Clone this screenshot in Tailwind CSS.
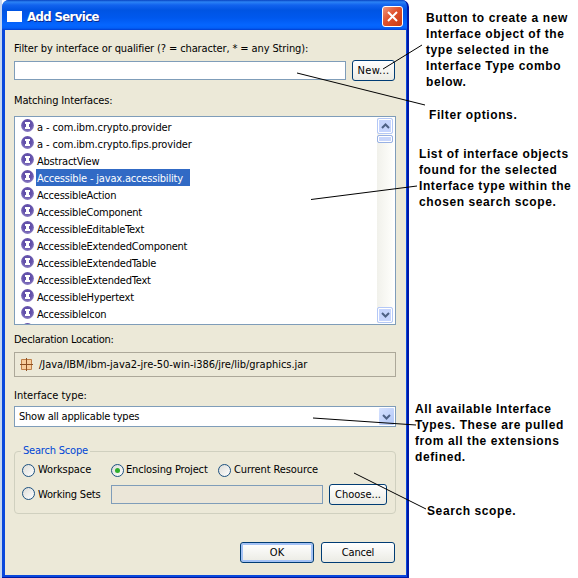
<!DOCTYPE html>
<html lang="en">
<head>
<meta charset="utf-8">
<title>Add Service</title>
<script src="https://cdn.jsdelivr.net/npm/@tailwindcss/browser@4"></script>
</head>
<body class="bg-white">
<svg class="absolute h-0 w-0">
  <defs>
    <radialGradient id="purple" cx="50%" cy="40%" r="60%"><stop offset="0" stop-color="#5a48a4"/><stop offset=".6" stop-color="#6654ac"/><stop offset="1" stop-color="#8d80c4"/></radialGradient>
    <symbol id="iface" viewBox="0 0 13 13"><circle cx="6.5" cy="6.5" r="6.4" fill="url(#purple)"/><path d="M4 3h5v2H8v3h1v2H4V8h1V5H4z" fill="#fff"/></symbol>
    <symbol id="chev" viewBox="0 0 9 6"><path d="M1 1l3.500 3.500L8 1" fill="none" stroke="#4d6185" stroke-width="2"/></symbol>
  </defs>
</svg>
<div class="relative flex h-[578px] w-[578px] overflow-hidden bg-white font-['DejaVu_Sans_Condensed','DejaVu_Sans',sans-serif] text-[11px] leading-[14px] whitespace-nowrap text-black">
  <div class="h-full w-[2px] shrink-0 bg-[#c5d5f0]"></div>
  <section class="flex h-[578px] w-[407px] shrink-0 flex-col overflow-hidden rounded-t-[7px] border-r-[2px] border-b-[1px] border-[#0019a5] bg-[#0a48dc]">
    <header class="flex h-[30px] shrink-0 items-center bg-[linear-gradient(180deg,#0842c0_0,#2b83f5_2px,#1263ee_5px,#0054e3_10px,#0058ee_18px,#0566ff_25px,#0360f8_28px,#003dd0_30px)] pt-[3px] pr-[4px] pl-[5px]">
      <span class="mb-[1px] h-[11px] w-[15px] bg-white"></span>
      <h1 class="ml-[5px] grow font-['DejaVu_Sans_Condensed',sans-serif] text-[13px] font-bold tracking-[-0.6px] text-white [text-shadow:1px_1px_0_#0a2a8c]">Add Service</h1>
      <span class="flex h-[21px] w-[21px] items-center justify-center rounded-[3px] border border-white bg-[linear-gradient(135deg,#f0967c,#e0512c_45%,#c63a14)]">
        <svg class="h-[11px] w-[11px]" viewBox="0 0 11 11"><path d="M1 1l9 9M10 1l-9 9" stroke="#fff" stroke-width="2"/></svg>
      </span>
    </header>
    <div class="mr-[1px] ml-[3px] flex h-[545px] flex-col bg-[#ece9d8] pr-[10px] pl-[9px]">
      <label class="mt-[12px] h-[19px] tracking-[-0.12px]">Filter by interface or qualifier (? = character, * = any String):</label>
      <div class="flex h-[20px] items-start justify-between pr-[1px]">
        <span class="h-[19px] w-[332px] shrink-0 border border-[#7f9db9] bg-white"></span>
        <button class="-mt-[1px] h-[21px] w-[43px] shrink-0 rounded-[3px] border border-[#003c74] bg-linear-to-b from-white to-[#ebebe4] leading-none tracking-[0.3px]">New...</button>
      </div>
      <label class="mt-[13px] h-[22px] tracking-[-0.15px]">Matching Interfaces:</label>
      <div class="flex h-[209px] shrink-0 justify-between overflow-hidden border border-[#7f9db9] bg-white py-[1px] pr-[2px] pl-[6px]">
        <ul class="flex flex-col tracking-[-0.22px]">
          <li class="flex h-[17px] shrink-0"><svg class="mt-[1px] h-[13px] w-[13px]"><use href="#iface"/></svg><span class="ml-[2px] h-[17px] px-[1px] leading-[20px] tracking-[-0.12px]">a - com.ibm.crypto.provider</span></li>
          <li class="flex h-[17px] shrink-0"><svg class="mt-[1px] h-[13px] w-[13px]"><use href="#iface"/></svg><span class="ml-[2px] h-[17px] px-[1px] leading-[20px] tracking-[-0.12px]">a - com.ibm.crypto.fips.provider</span></li>
          <li class="flex h-[17px] shrink-0"><svg class="mt-[1px] h-[13px] w-[13px]"><use href="#iface"/></svg><span class="ml-[2px] h-[17px] px-[1px] leading-[20px]">AbstractView</span></li>
          <li class="flex h-[17px] shrink-0"><svg class="mt-[1px] h-[13px] w-[13px]"><use href="#iface"/></svg><span class="ml-[2px] h-[17px] w-[154px] bg-[#316ac5] px-[1px] leading-[20px] tracking-[-0.18px] text-white">Accessible - javax.accessibility</span></li>
          <li class="flex h-[17px] shrink-0"><svg class="mt-[1px] h-[13px] w-[13px]"><use href="#iface"/></svg><span class="ml-[2px] h-[17px] px-[1px] leading-[20px]">AccessibleAction</span></li>
          <li class="flex h-[17px] shrink-0"><svg class="mt-[1px] h-[13px] w-[13px]"><use href="#iface"/></svg><span class="ml-[2px] h-[17px] px-[1px] leading-[20px]">AccessibleComponent</span></li>
          <li class="flex h-[17px] shrink-0"><svg class="mt-[1px] h-[13px] w-[13px]"><use href="#iface"/></svg><span class="ml-[2px] h-[17px] px-[1px] leading-[20px]">AccessibleEditableText</span></li>
          <li class="flex h-[17px] shrink-0"><svg class="mt-[1px] h-[13px] w-[13px]"><use href="#iface"/></svg><span class="ml-[2px] h-[17px] px-[1px] leading-[20px]">AccessibleExtendedComponent</span></li>
          <li class="flex h-[17px] shrink-0"><svg class="mt-[1px] h-[13px] w-[13px]"><use href="#iface"/></svg><span class="ml-[2px] h-[17px] px-[1px] leading-[20px]">AccessibleExtendedTable</span></li>
          <li class="flex h-[17px] shrink-0"><svg class="mt-[1px] h-[13px] w-[13px]"><use href="#iface"/></svg><span class="ml-[2px] h-[17px] px-[1px] leading-[20px]">AccessibleExtendedText</span></li>
          <li class="flex h-[17px] shrink-0"><svg class="mt-[1px] h-[13px] w-[13px]"><use href="#iface"/></svg><span class="ml-[2px] h-[17px] px-[1px] leading-[20px]">AccessibleHypertext</span></li>
          <li class="flex h-[17px] shrink-0"><svg class="mt-[1px] h-[13px] w-[13px]"><use href="#iface"/></svg><span class="ml-[2px] h-[17px] px-[1px] leading-[20px]">AccessibleIcon</span></li>
          <li class="flex h-[2px] shrink-0 overflow-hidden"><svg class="mt-[1px] h-[13px] w-[13px] shrink-0"><use href="#iface"/></svg></li>
        </ul>
        <div class="flex h-[205px] w-[16px] flex-col bg-linear-to-r from-[#f1f1eb] to-[#fefefb]">
          <span class="flex h-[16px] shrink-0 items-center justify-center rounded-[2px] border border-[#b4c8f6] bg-[#c6d5fd] inset-ring inset-ring-white"><svg class="h-[6px] w-[9px] rotate-180"><use href="#chev"/></svg></span>
          <span class="mt-[1px] h-[8px] shrink-0 rounded-[2px] border border-[#98b1e4] bg-[#c8d6fb] inset-ring inset-ring-white"></span>
          <span class="mt-auto flex h-[16px] shrink-0 items-center justify-center rounded-[2px] border border-[#b4c8f6] bg-[#c6d5fd] inset-ring inset-ring-white"><svg class="h-[6px] w-[9px]"><use href="#chev"/></svg></span>
        </div>
      </div>
      <label class="mt-[8px] h-[19px] tracking-[-0.27px]">Declaration Location:</label>
      <div class="flex h-[25px] shrink-0 items-center border border-[#aca899] pl-[5px]">
        <svg class="h-[13px] w-[13px]" viewBox="0 0 13 13"><path d="M1.500 1.500h10v10h-10z" fill="#f8cd9c" stroke="#c08048"/><path d="M6.500 0v13M0 6.500h13" stroke="#8d5023"/></svg>
        <span class="ml-[6px] tracking-[-0.02px]">/Java/IBM/ibm-java2-jre-50-win-i386/jre/lib/graphics.jar</span>
      </div>
      <label class="mt-[12px] h-[17px]">Interface type:</label>
      <div class="flex h-[21px] shrink-0 items-center justify-between border border-[#7f9db9] bg-white pr-[1px] pl-[4px]">
        <span class="tracking-[-0.22px]">Show all applicable types</span>
        <span class="flex h-[17px] w-[15px] items-center justify-center rounded-[1px] bg-linear-to-br from-[#d6e2ff] to-[#b2c7f7]"><svg class="h-[6px] w-[9px]"><use href="#chev"/></svg></span>
      </div>
      <fieldset class="mt-[17px] h-[70px] shrink-0 rounded-[4px] border border-[#d0d0bf] px-[7px]">
        <legend class="-ml-[1px] px-[2px] tracking-[-0.2px] text-[#0046d5]">Search Scope</legend>
        <div class="mt-[5px] flex h-[14px] items-center">
          <span class="h-[13px] w-[13px] rounded-full border border-[#1c5180] bg-linear-to-br from-[#dcdcd7] to-white"></span><span class="ml-[3px] w-[73px] tracking-[-0.1px]">Workspace</span>
          <span class="flex h-[13px] w-[13px] items-center justify-center rounded-full border border-[#1c5180] bg-linear-to-br from-[#dcdcd7] to-white"><i class="h-[5px] w-[5px] rounded-full bg-[#2fae2c]"></i></span><span class="ml-[2px] w-[92px] tracking-[-0.15px]">Enclosing Project</span>
          <span class="h-[13px] w-[13px] rounded-full border border-[#1c5180] bg-linear-to-br from-[#dcdcd7] to-white"></span><span class="ml-[3px] tracking-[-0.1px]">Current Resource</span>
        </div>
        <div class="mt-[7px] flex h-[21px] items-center">
          <span class="mb-[2px] h-[13px] w-[13px] shrink-0 rounded-full border border-[#1c5180] bg-linear-to-br from-[#dcdcd7] to-white"></span><span class="ml-[3px] w-[73px] shrink-0 tracking-[-0.2px]">Working Sets</span>
          <span class="h-[19px] w-[212px] shrink-0 border border-[#7f9db9] bg-[#ebe6d8]"></span>
          <button class="-mt-[1px] ml-[6px] h-[21px] w-[58px] shrink-0 rounded-[3px] border border-[#003c74] bg-linear-to-b from-white to-[#ebebe4] leading-none">Choose...</button>
        </div>
      </fieldset>
      <footer class="mt-[28px] flex justify-end gap-[7px] pr-[1px]">
        <button class="h-[21px] w-[74px] rounded-[3px] border border-[#003c74] bg-linear-to-b from-white to-[#ebebe4] leading-none inset-ring-2 inset-ring-[#a4c2f5]">OK</button>
        <button class="h-[21px] w-[74px] rounded-[3px] border border-[#003c74] bg-linear-to-b from-white to-[#ebebe4] leading-none tracking-[-0.2px]">Cancel</button>
      </footer>
    </div>
  </section>
  <aside class="flex flex-col font-['Liberation_Sans',Arial,sans-serif] text-[12px] leading-[16px] font-bold tracking-[0.6px]">
    <p class="mt-[10px] ml-[17px]">Button to create a new<br>Interface object of the<br>type selected in the<br>Interface Type combo<br>below.</p>
    <p class="mt-[17px] ml-[20px]">Filter options.</p>
    <p class="mt-[23px] ml-[10px]">List of interface objects<br>found for the selected<br>Interface type within the<br>chosen search scope.</p>
    <p class="mt-[191px] ml-[6px]">All available Interface<br>Types. These are pulled<br>from all the extensions<br>defined.</p>
    <p class="mt-[38px] ml-[18px]">Search scope.</p>
  </aside>
  <svg class="absolute inset-0 h-[578px] w-[578px]" viewBox="0 0 578 578" stroke="#000" stroke-width="1" fill="none"><path d="M383 69L422 45M297 73L425 105M311 199.500L417 186M313 418L416 425M354 473L426 509"/></svg>
</div>
</body>
</html>
